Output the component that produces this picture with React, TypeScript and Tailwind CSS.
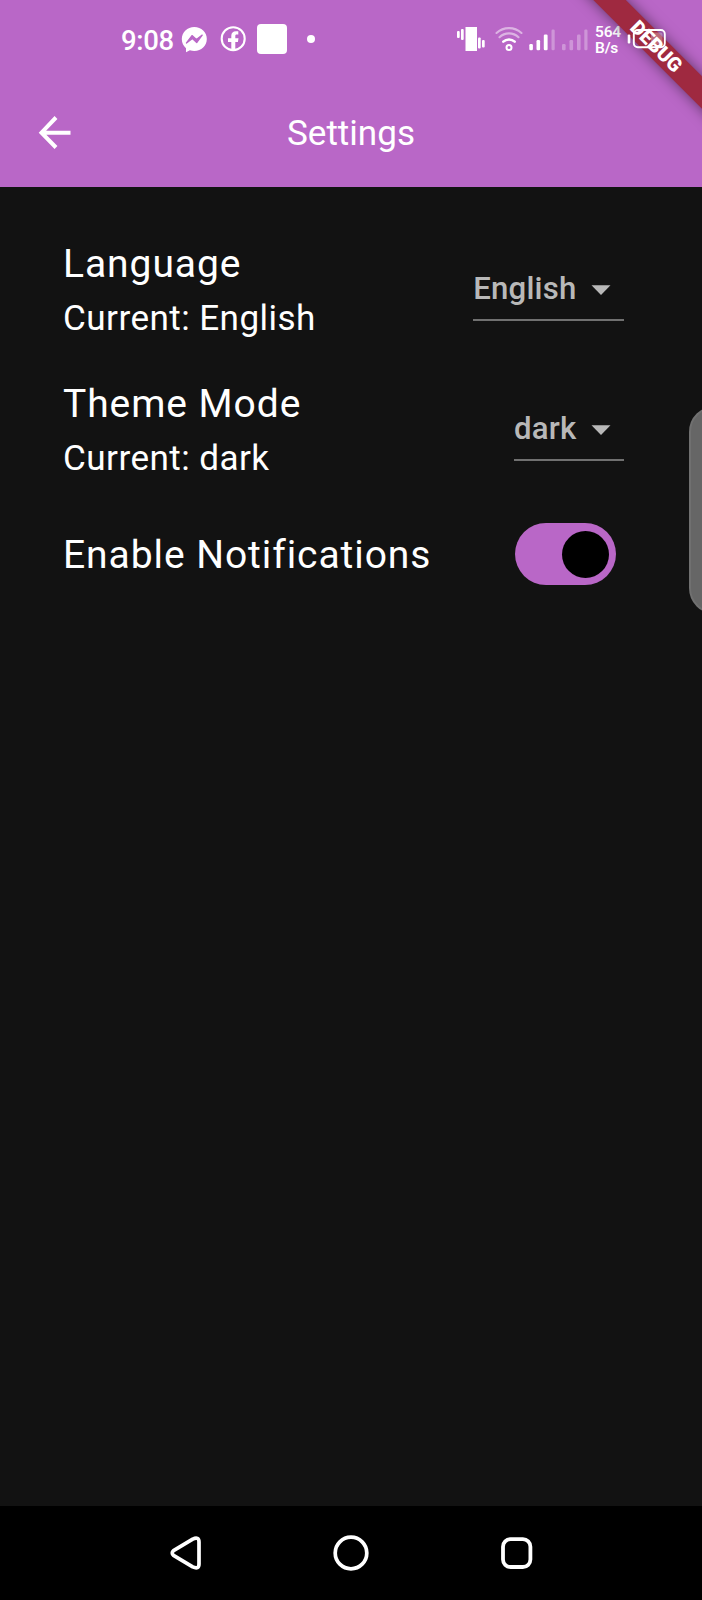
import React from "react";

function StatusBar() {
  return (
    <div className="flex h-[78px] items-start pl-[121px] text-white">
      <span className="mt-[24px] w-[60px] text-[27.500px] leading-[34px] font-medium tracking-[-0.300px]">9:08</span>
      <svg className="mt-[26px] ml-0" width="27" height="27" viewBox="0 0 27 27" fill="none">
        <path d="M13.3 1C6.3 1 .8 6 .8 13c0 3.700 1.600 7 4.200 9.200v4.100l3.900-2.100c1.400.5 2.900.8 4.400.8 7 0 12.500-5.300 12.500-12S20.300 1 13.300 1Z" fill="white" />
        <path d="M5.500 17l5.500-7.400 4.400 3.900 5.800-4.400-5.500 7.400-4.300-3.900Z" fill="#b967c7" stroke="#b967c7" strokeWidth="1.300" strokeLinejoin="round" />
      </svg>
      <svg className="mt-[26px] ml-[12px]" width="27" height="27" viewBox="0 0 27 27" fill="none">
        <circle cx="13.200" cy="12.700" r="11.500" stroke="white" strokeWidth="2.100" />
        <path d="M11.300 24.300v-8.400H8v-3.700h3.300V9.800c0-3.100 1.800-4.600 4.600-4.600h2.400v3.200h-1.500c-1.300 0-1.500.7-1.500 1.700v2.100h3.200l-.6 3.700h-2.600v8.400Z" fill="white" />
      </svg>
      <div className="mt-[24px] ml-[10px] h-[30px] w-[30px] rounded-[4px] bg-white" />
      <div className="mt-[35px] ml-[20px] h-[8px] w-[8px] rounded-full bg-white" />
      <svg className="mt-[26px] ml-[142px]" width="28" height="26" viewBox="0 0 28 26" fill="white">
        <rect x="0" y="5" width="2.700" height="7" rx="1" />
        <rect x="4" y="3" width="2.700" height="11" rx="1" />
        <rect x="8.500" y="1" width="11.500" height="24" />
        <rect x="21" y="11.500" width="2.700" height="11" rx="1" />
        <rect x="25" y="14" width="2.700" height="7.500" rx="1" />
      </svg>
      <svg className="mt-[26px] ml-[10px]" width="28" height="26" viewBox="0 0 28 26" fill="none" stroke="white" strokeLinecap="round">
        <circle cx="14" cy="21.500" r="2.500" strokeWidth="2" />
        <path d="M8.300 15.700a8.300 8.300 0 0 1 11.400 0" strokeWidth="2.500" />
        <path d="M4.500 11.200a13.700 13.700 0 0 1 19 0" strokeWidth="2.100" opacity=".5" />
        <path d="M1.500 7a18.500 18.500 0 0 1 25 0" strokeWidth="2.100" opacity=".5" />
      </svg>
      <svg className="mt-[28px] ml-[6px]" width="60" height="24" viewBox="0 0 60 24" fill="white">
        <rect x="0.300" y="16" width="3.600" height="6.200" rx="1.200" />
        <rect x="7.500" y="12" width="3.600" height="10.200" rx="1.200" />
        <rect x="14.800" y="6.500" width="3.800" height="15.700" rx="1.200" />
        <g opacity=".3">
          <rect x="22.500" y="1.500" width="3.200" height="20.700" rx="1.200" />
          <rect x="33" y="16" width="3.600" height="6.200" rx="1.200" />
          <rect x="40.500" y="12" width="3.600" height="10.200" rx="1.200" />
          <rect x="48" y="6.500" width="3.600" height="15.700" rx="1.200" />
          <rect x="55.300" y="1.500" width="3.200" height="20.700" rx="1.200" />
        </g>
      </svg>
      <div className="mt-[25px] ml-[6px] w-[32px] text-[15.500px] leading-[15.500px] font-semibold tracking-[-0.200px]">
        <div>564</div>
        <div>B/s</div>
      </div>
      <svg className="relative z-20 mt-[28px] ml-0" width="40" height="22" viewBox="0 0 40 22" fill="none">
        <rect x="0.700" y="6.500" width="2.600" height="9" rx="1" fill="white" />
        <rect x="6.800" y="2" width="31" height="17.200" rx="4" stroke="white" strokeWidth="1.900" />
        <rect x="24" y="4.500" width="11.500" height="12" rx="2" fill="white" opacity=".3" />
      </svg>
    </div>
  );
}

function DebugBanner() {
  return (
    <div className="pointer-events-none absolute top-0 right-0 z-10 h-[140px] w-[140px] overflow-hidden">
      <div className="absolute top-[34.500px] left-[-6.500px] flex h-[23.400px] w-[200px] rotate-45 items-center justify-center bg-[#9f2940] text-[19.900px] leading-none font-black text-white shadow-[0_0_14px_rgba(0,0,0,0.5)]">
        DEBUG
      </div>
    </div>
  );
}

function AppBar() {
  return (
    <div className="grid h-[109px] grid-cols-[1fr_auto_1fr] items-start">
      <svg className="mt-[38px] ml-[38px]" width="34" height="34" viewBox="0 0 34 34" fill="none" stroke="white" strokeWidth="4">
        <path d="M18 1.500 3.500 16.700 18 31.500M4 16.700h28.500" />
      </svg>
      <h1 className="mt-[34px] text-[35.100px] leading-[42px] font-normal">Settings</h1>
    </div>
  );
}

function Label({ title, current }: { title: string; current?: string }) {
  return (
    <div>
      <div className="text-[39px] leading-[46px] tracking-[0.930px]">{title}</div>
      {current && <div className="mt-[10px] text-[35.100px] leading-[42px] tracking-[0.440px]">Current: {current}</div>}
    </div>
  );
}

function Select({ value }: { value: string }) {
  return (
    <div className="mt-[24px] flex h-[56px] items-start border-b-2 border-[#707070] pr-[13px] text-[#b8b8b8]">
      <span className="mt-[5px] text-[31.200px] leading-[38px] font-medium tracking-[0.200px]">{value}</span>
      <svg className="mt-[20px] ml-[14.500px]" width="20" height="11" viewBox="0 0 20 11" fill="currentColor">
        <path d="M.5.200h19L10 10Z" />
      </svg>
    </div>
  );
}

function NavBar() {
  return (
    <div className="flex h-[94px] items-start bg-black pt-[28px] pl-[168px]">
      <svg width="36" height="38" viewBox="0 0 36 38" fill="none" stroke="white" strokeWidth="3.700" strokeLinejoin="round">
        <path d="M5.500 16.700 24.700 5.100Q31 2.300 31 8V30Q31 35.700 24.700 32.900L5.500 21.300Q3 19 5.500 16.700Z" />
      </svg>
      <svg className="ml-[129px]" width="36" height="38" viewBox="0 0 36 38" fill="none" stroke="white" strokeWidth="3.700">
        <circle cx="18" cy="19" r="15.800" />
      </svg>
      <svg className="ml-[129px]" width="36" height="38" viewBox="0 0 36 38" fill="none" stroke="white" strokeWidth="3.800">
        <rect x="5" y="5.200" width="27.400" height="27.800" rx="7.500" />
      </svg>
    </div>
  );
}

export default function App() {
  return (
    <div className="relative flex h-[1600px] w-[702px] flex-col overflow-hidden bg-[#121212] font-['Roboto',sans-serif] text-white">
      <DebugBanner />
      <header className="bg-[#b967c7]">
        <StatusBar />
        <AppBar />
      </header>
      <main className="flex-1 pt-[54px] pr-[78px] pl-[63px]">
        <div className="flex h-[140.400px] justify-between">
          <Label title="Language" current="English" />
          <Select value="English" />
        </div>
        <div className="flex h-[140.400px] justify-between">
          <Label title="Theme Mode" current="dark" />
          <Select value="dark" />
        </div>
        <div className="flex items-center justify-between pt-[1.300px] pr-[8px]">
          <div className="pt-[2px]">
            <Label title="Enable Notifications" />
          </div>
          <div className="flex h-[62.400px] w-[101.500px] items-center justify-end rounded-full bg-[#b967c7] pr-[7.500px]">
            <div className="h-[47px] w-[47px] rounded-full bg-black" />
          </div>
        </div>
      </main>
      <NavBar />
      <div className="absolute top-[406px] left-[689px] h-[208px] w-[60px] rounded-[26px] border-2 border-[#707070] bg-[#666666]" />
    </div>
  );
}
